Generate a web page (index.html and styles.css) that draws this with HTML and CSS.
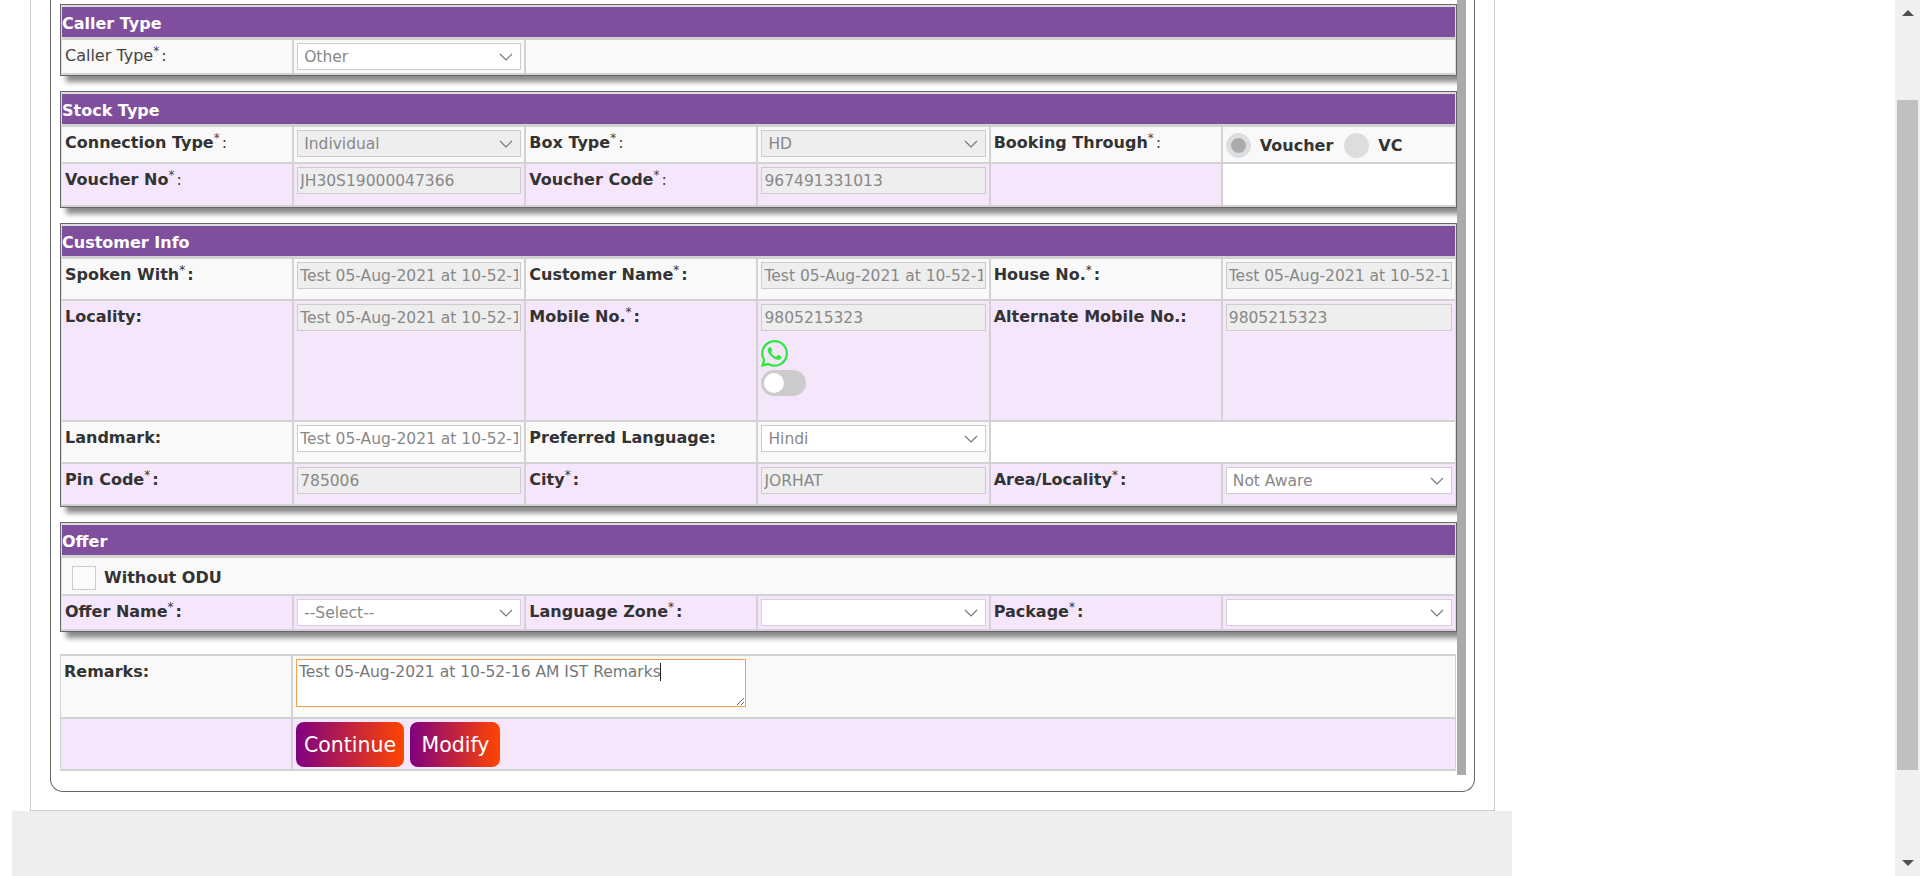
FILE: index.html

```html
<!DOCTYPE html>
<html lang="en">
<head>
    <meta charset="UTF-8">
    <title>Booking</title>
    <link rel="stylesheet" href="styles.css">
</head>
<body>
    <div class="main">
        <div class="frame">
            <div class="box">
                <div class="scroll">

                    <div class="panel">
                        <table>
                            <tr><th colspan="6">Caller Type</th></tr>
                            <tr class="row-35">
                                <td><span class="label-plain">Caller Type<sup>*</sup>:</span></td>
                                <td><select class="field"><option>Other</option></select></td>
                                <td colspan="4" class="last"></td>
                            </tr>
                        </table>
                    </div>

                    <div class="panel">
                        <table>
                            <tr><th colspan="6">Stock Type</th></tr>
                            <tr class="row-37">
                                <td><b>Connection Type</b><span class="label-plain"><sup>*</sup>:</span></td>
                                <td><select class="field off" disabled><option>Individual</option></select></td>
                                <td><b>Box Type</b><span class="label-plain"><sup>*</sup>:</span></td>
                                <td><select class="field off" disabled><option>HD</option></select></td>
                                <td><b>Booking Through</b><span class="label-plain"><sup>*</sup>:</span></td>
                                <td class="last">
                                    <div class="radios">
                                        <span class="radio checked"></span><b>Voucher</b>
                                        <span class="radio"></span><b>VC</b>
                                    </div>
                                </td>
                            </tr>
                            <tr class="row-43 pink">
                                <td><b>Voucher No</b><span class="label-plain"><sup>*</sup>:</span></td>
                                <td><input class="field off" disabled value="JH30S19000047366"></td>
                                <td><b>Voucher Code</b><span class="label-plain"><sup>*</sup>:</span></td>
                                <td><input class="field off" disabled value="967491331013"></td>
                                <td></td>
                                <td class="last blank"></td>
                            </tr>
                        </table>
                    </div>

                    <div class="panel">
                        <table>
                            <tr><th colspan="6">Customer Info</th></tr>
                            <tr class="row-42">
                                <td><b>Spoken With<sup>*</sup>:</b></td>
                                <td><input class="field off" disabled value="Test 05-Aug-2021 at 10-52-16 AM IST"></td>
                                <td><b>Customer Name<sup>*</sup>:</b></td>
                                <td><input class="field off" disabled value="Test 05-Aug-2021 at 10-52-16 AM IST"></td>
                                <td><b>House No.<sup>*</sup>:</b></td>
                                <td class="last"><input class="field off" disabled value="Test 05-Aug-2021 at 10-52-16 AM IST"></td>
                            </tr>
                            <tr class="row-121 pink">
                                <td><b>Locality:</b></td>
                                <td><input class="field off" disabled value="Test 05-Aug-2021 at 10-52-16 AM IST"></td>
                                <td><b>Mobile No.<sup>*</sup>:</b></td>
                                <td>
                                    <input class="field off" disabled value="9805215323">
                                    <svg class="wa" viewBox="0 0 24 24"><path d="M17.472 14.382c-.297-.149-1.758-.867-2.03-.967-.273-.099-.471-.148-.67.15-.197.297-.767.966-.94 1.164-.173.199-.347.223-.644.075-.297-.15-1.255-.463-2.39-1.475-.883-.788-1.48-1.761-1.653-2.059-.173-.297-.018-.458.13-.606.134-.133.298-.347.446-.52.149-.174.198-.298.298-.497.099-.198.05-.371-.025-.52-.075-.149-.669-1.612-.916-2.207-.242-.579-.487-.5-.669-.51-.173-.008-.371-.01-.57-.01-.198 0-.52.074-.792.372-.272.297-1.04 1.016-1.04 2.479 0 1.462 1.065 2.875 1.213 3.074.149.198 2.096 3.2 5.077 4.487.709.306 1.262.489 1.694.625.712.227 1.36.195 1.871.118.571-.085 1.758-.719 2.006-1.413.248-.694.248-1.289.173-1.413-.074-.124-.272-.198-.57-.347m-5.421 7.403h-.004a9.87 9.87 0 01-5.031-1.378l-.361-.214-3.741.982.998-3.648-.235-.374a9.86 9.86 0 01-1.51-5.26c.001-5.45 4.436-9.884 9.888-9.884 2.64 0 5.122 1.03 6.988 2.898a9.825 9.825 0 012.893 6.994c-.003 5.45-4.437 9.884-9.885 9.884m8.413-18.297A11.815 11.815 0 0012.05 0C5.495 0 .16 5.335.157 11.892c0 2.096.547 4.142 1.588 5.945L.057 24l6.305-1.654a11.882 11.882 0 005.683 1.448h.005c6.554 0 11.89-5.335 11.893-11.893a11.821 11.821 0 00-3.48-8.413z"/></svg>
                                    <span class="toggle"></span>
                                </td>
                                <td><b>Alternate Mobile No.:</b></td>
                                <td class="last"><input class="field off" disabled value="9805215323"></td>
                            </tr>
                            <tr class="row-42">
                                <td><b>Landmark:</b></td>
                                <td><input class="field" value="Test 05-Aug-2021 at 10-52-16 AM IST"></td>
                                <td><b>Preferred Language:</b></td>
                                <td><select class="field"><option>Hindi</option></select></td>
                                <td colspan="2" class="last blank"></td>
                            </tr>
                            <tr class="row-42 pink">
                                <td><b>Pin Code<sup>*</sup>:</b></td>
                                <td><input class="field off" disabled value="785006"></td>
                                <td><b>City<sup>*</sup>:</b></td>
                                <td><input class="field off" disabled value="JORHAT"></td>
                                <td><b>Area/Locality<sup>*</sup>:</b></td>
                                <td class="last"><select class="field"><option>Not Aware</option></select></td>
                            </tr>
                        </table>
                    </div>

                    <div class="panel">
                        <table>
                            <tr><th colspan="6">Offer</th></tr>
                            <tr class="row-38">
                                <td colspan="6" class="last">
                                    <div class="odu">
                                        <span class="check"></span><b>Without ODU</b>
                                    </div>
                                </td>
                            </tr>
                            <tr class="row-35 pink lilac">
                                <td><b>Offer Name<sup>*</sup>:</b></td>
                                <td><select class="field"><option>--Select--</option></select></td>
                                <td><b>Language Zone<sup>*</sup>:</b></td>
                                <td><select class="field"><option></option></select></td>
                                <td><b>Package<sup>*</sup>:</b></td>
                                <td class="last"><select class="field"><option></option></select></td>
                            </tr>
                        </table>
                    </div>

                    <table class="remarks">
                        <colgroup><col class="remarks-label"><col></colgroup>
                        <tr class="row-63">
                            <td><b>Remarks:</b></td>
                            <td class="last">
                                <div class="note-wrap">
                                    <textarea class="note">Test 05-Aug-2021 at 10-52-16 AM IST Remarks</textarea>
                                    <span class="caret"></span>
                                </div>
                            </td>
                        </tr>
                        <tr class="row-52 pink">
                            <td></td>
                            <td class="last">
                                <button class="btn btn-continue">Continue</button>
                                <button class="btn btn-modify">Modify</button>
                            </td>
                        </tr>
                    </table>

                </div>
            </div>
        </div>
        <div class="footer-bar"></div>
    </div>

    <div class="scrollbar">
        <span class="arrow-up"></span>
        <span class="thumb"></span>
        <span class="arrow-down"></span>
    </div>
</body>
</html>
```

FILE: styles.css

```css
html, body {
    height: 100%;
    margin: 0;
    overflow: hidden;
}
body {
    display: flex;
    justify-content: space-between;
    font-family: "DejaVu Sans", Verdana, sans-serif;
    font-size: 14px;
    color: #333;
    background-color: white;
}

/* page shell */
.main {
    width: 1500px;
    margin-left: 12px;
}
.frame {
    box-sizing: border-box;
    width: 1465px;
    height: 811px;
    margin-left: 18px;
    padding: 0 19px 18px;
    border: 1px solid #ccc;
    border-top: none;
}
.box {
    box-sizing: border-box;
    height: 792px;
    padding: 0 0 16px 9px;
    border: 1px solid #666;
    border-top: none;
    border-radius: 0 0 13px 13px;
}
.scroll {
    box-sizing: border-box;
    width: 1406px;
    height: 775px;
    padding-top: 4px;
    overflow: hidden;
    border-right: 9px solid #aaa;
}
.footer-bar {
    height: 65px;
    background-color: #eee;
}

/* section tables */
.panel {
    padding: 2px 1px 0;
    margin-bottom: 15px;
    border: 1px solid #666;
    background-color: #ddd;
    box-shadow: 6px 6px 5px #8a8a8a;
}
.panel:nth-child(4) {
    margin-bottom: 22px;
}
table {
    width: 100%;
    table-layout: fixed;
    border-collapse: separate;
    border-spacing: 0;
    background-color: #f9f9f9;
}
th {
    box-sizing: border-box;
    height: 33px;
    padding: 2px 0 0;
    text-align: left;
    font-size: 16px;
    color: white;
    background-color: #7f4f9d;
    border-bottom: 3px solid #d2d2d2;
}
td {
    box-sizing: border-box;
    padding: 3px 3px 0;
    vertical-align: top;
    line-height: 26px;
    border-right: 2px solid #d2d2d2;
    border-bottom: 2px solid #d2d2d2;
}
td.last {
    border-right: none;
}
b {
    font-size: 16px;
}
sup {
    margin-right: 2px;
    font-size: 12px;
    font-weight: normal;
    line-height: 0;
}
.label-plain {
    font-size: 16px;
    color: #444;
}
.pink td {
    background-color: #f5e6fb;
}
.pink td.blank, td.blank {
    background-color: white;
}
.lilac td {
    border-color: #d8cfdc;
}
.lilac .field {
    border-color: #d8cfdc;
}

.row-35 { height: 35px; }
.row-37 { height: 37px; }
.row-38 { height: 38px; }
.row-42 { height: 42px; }
.row-43 { height: 43px; }
.row-52 { height: 52px; }
.row-63 { height: 63px; }
.row-121 { height: 121px; }

/* form fields */
.field {
    display: block;
    box-sizing: border-box;
    width: 100%;
    height: 27px;
    padding: 0 2px;
    border: 1px solid #ccc;
    border-radius: 0;
    font-family: "DejaVu Sans", Verdana, sans-serif;
    font-size: 15.5px;
    color: #888;
    background-color: white;
    outline: none;
}
select.field {
    padding-left: 6px;
    appearance: none;
    background-image: url("data:image/svg+xml,%3Csvg xmlns='http://www.w3.org/2000/svg' width='14' height='8'%3E%3Cpath d='M1 1l6 6 6-6' fill='none' stroke='%23777' stroke-width='1.2'/%3E%3C/svg%3E");
    background-repeat: no-repeat;
    background-position: right 7px center;
    opacity: 1;
}
.field.off {
    background-color: #eee;
}

.radios {
    display: flex;
    align-items: center;
    height: 31px;
}
.radio {
    box-sizing: border-box;
    width: 25px;
    height: 25px;
    margin-right: 9px;
    border-radius: 50%;
    background-color: #ddd;
}
.radio.checked {
    border: 5px solid #dcdfe2;
    background-color: #aaa;
}
.radios b {
    margin-right: 11px;
}
.odu {
    display: flex;
    align-items: center;
    height: 33px;
    padding-left: 7px;
}
.check {
    box-sizing: border-box;
    width: 24px;
    height: 24px;
    margin-right: 8px;
    border: 1px solid #ccc;
    background-color: #fbfbfb;
}
.wa {
    display: block;
    width: 27px;
    height: 27px;
    margin-top: 9px;
    fill: #2bea3c;
}
.toggle {
    display: block;
    position: relative;
    width: 45px;
    height: 26px;
    margin-top: 3px;
    border-radius: 13px;
    background-color: #ccc;
}
.toggle::before {
    content: "";
    position: absolute;
    left: 3px;
    top: 3px;
    width: 20px;
    height: 20px;
    border-radius: 50%;
    background-color: white;
}

/* remarks */
.remarks {
    border: 1px solid #d2d2d2;
    border-top-width: 2px;
    border-bottom: none;
    width: 1396px;
}
.remarks-label {
    width: 232px;
}
.note-wrap {
    position: relative;
    width: 450px;
    height: 48px;
}
.note {
    display: block;
    box-sizing: border-box;
    width: 450px;
    height: 48px;
    padding: 3px 2px;
    border: 1px solid #f7a04b;
    font-family: "DejaVu Sans", Verdana, sans-serif;
    font-size: 15.5px;
    color: #777;
    outline: none;
}
.caret {
    position: absolute;
    left: 364px;
    top: 4px;
    width: 1px;
    height: 18px;
    background-color: #222;
}
.btn {
    height: 45px;
    padding: 0;
    margin-right: 2px;
    border: none;
    border-radius: 8px;
    font-family: "DejaVu Sans", Verdana, sans-serif;
    font-size: 20.5px;
    color: white;
    background: linear-gradient(to right, purple, orangered);
}
.btn-continue {
    width: 108px;
}
.btn-modify {
    width: 90px;
}

/* window scrollbar */
.scrollbar {
    flex: none;
    position: relative;
    width: 25px;
    background-color: #f0f0f0;
}
.thumb {
    position: absolute;
    left: 2px;
    top: 100px;
    width: 21px;
    height: 670px;
    background-color: #c0c0c0;
}
.arrow-up, .arrow-down {
    position: absolute;
    left: 7px;
    border-left: 6px solid transparent;
    border-right: 6px solid transparent;
}
.arrow-up {
    top: 10px;
    border-bottom: 6px solid #505050;
}
.arrow-down {
    top: 860px;
    border-top: 6px solid #505050;
}
```
